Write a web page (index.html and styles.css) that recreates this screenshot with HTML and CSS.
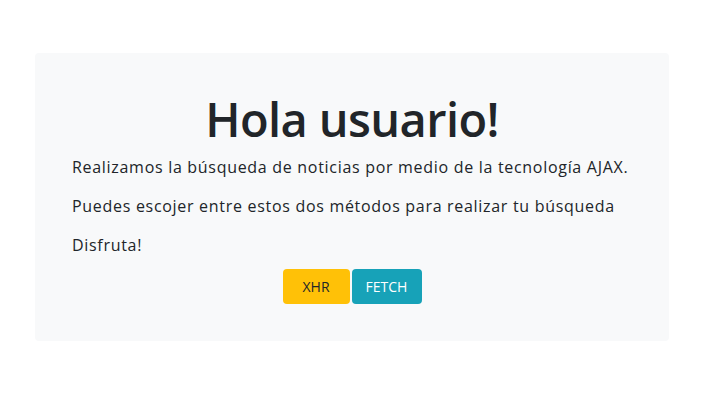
FILE: index.html
```html
<!DOCTYPE html>
<html lang="es">
<head>
<meta charset="utf-8">
<title>Noticias AJAX</title>
<link rel="stylesheet" href="styles.css">
</head>
<body>
<main class="page">
  <section class="card">
    <h1 class="title">Hola usuario!</h1>
    <p class="text">Realizamos la búsqueda de noticias por medio de la tecnología AJAX.</p>
    <p class="text">Puedes escojer entre estos dos métodos para realizar tu búsqueda</p>
    <p class="text text-last">Disfruta!</p>
    <div class="actions">
      <button class="btn btn-xhr">XHR</button>
      <button class="btn btn-fetch">FETCH</button>
    </div>
  </section>
</main>
</body>
</html>
```

FILE: styles.css
```css
* { box-sizing: border-box; }
html, body { margin: 0; padding: 0; background: #fff; }
body {
  font-family: "Open Sans", "Noto Sans", sans-serif;
  color: #212529;
  font-size: 16px;
  line-height: 24px;
}
.page {
  padding: 53px 41px 0 35px;
}
.card {
  background: #f8f9fa;
  border-radius: 4px;
  padding: 37px 30px 37px 37px;
}
.title {
  margin: 0 0 7px 0;
  text-align: center;
  font-size: 47px;
  line-height: 58px;
  font-weight: 600;
  letter-spacing: -0.6px;
  padding-right: 7px;
}
.text {
  margin: 0 0 15px 0;
  letter-spacing: 0.7px;
  white-space: nowrap;
}
.text-last { margin-bottom: 12px; }
.actions {
  display: flex;
  justify-content: center;
  gap: 2px;
  padding-right: 7px;
}
.btn {
  font-family: inherit;
  font-size: 14px;
  height: 35px;
  border: none;
  border-radius: 4px;
  padding: 0 12px;
}
.btn-xhr { background: #ffc107; color: #212529; width: 67px; }
.btn-fetch { background: #17a2b8; color: #fff; width: 70px; }
```
